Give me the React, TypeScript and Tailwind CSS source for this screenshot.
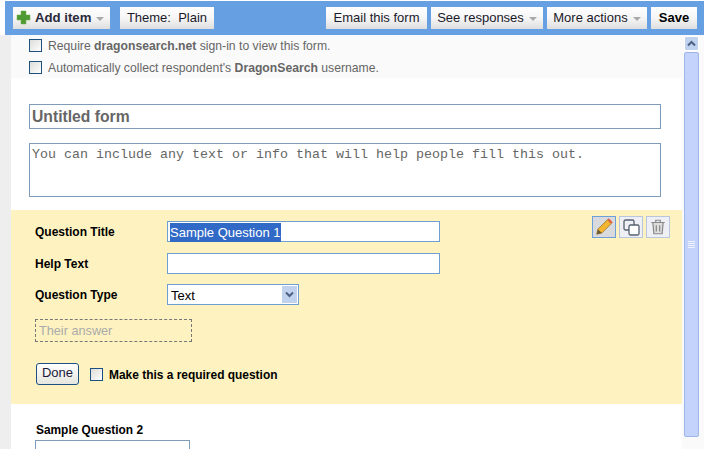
import React from "react";

const font = { fontFamily: '"Liberation Sans", Arial, sans-serif' };

function TopButton({ children, caret, bold, className = "" }: { children: React.ReactNode; caret?: boolean; bold?: boolean; className?: string }) {
  return (
    <div className={`flex h-[22px] items-center justify-center bg-gradient-to-b from-white via-[#f6f6f6] to-[#dedede] text-[13px] text-[#1a1a2a] ${bold ? "font-bold text-black" : ""} ${className}`}>
      <span className="whitespace-pre">{children}</span>
      {caret && <span className="ml-[5px] mt-[2px] h-0 w-0 border-x-[4px] border-t-[4px] border-x-transparent border-t-[#aaaaaa]" />}
    </div>
  );
}

function Check({ className = "" }: { className?: string }) {
  return <span className={`block h-[13px] w-[13px] shrink-0 border border-[#1c5180] bg-gradient-to-br from-[#dcdcd7] to-white ${className}`} />;
}

function ToolBtn({ children, active }: { children: React.ReactNode; active?: boolean }) {
  return (
    <div className={`flex h-[22px] w-[24px] items-center justify-center border ${active ? "border-[#6f9fd8] bg-[#d9dade]" : "border-[#b9c6dd] bg-[#eef0f5]"}`}>
      {children}
    </div>
  );
}

export default function App() {
  return (
    <div className="flex h-[449px] w-[704px] flex-col overflow-hidden bg-white" style={font}>
      <div className="ml-[5px] mt-px flex h-[34px] shrink-0 items-center bg-[#66a0e3] pb-px">
        <div className="ml-[8px] flex h-[22px] w-[97px] items-center bg-gradient-to-b from-white via-[#f6f6f6] to-[#dedede] pl-[3px] text-[13.2px] font-bold text-[#2a2a3a]">
          <svg width="15" height="15" viewBox="0 0 15 15" className="shrink-0">
            <path d="M5 1h5v4h4v5h-4v4H5v-4H1V5h4z" fill="#4f9a35" stroke="#6fae4a" strokeWidth="0.5" />
          </svg>
          <span className="ml-[4px]">Add item</span>
          <span className="ml-[5px] mt-[2px] h-0 w-0 border-x-[4px] border-t-[4px] border-x-transparent border-t-[#aaaaaa]" />
        </div>
        <TopButton className="ml-[10px] w-[94px]">Theme:  Plain</TopButton>
        <TopButton className="ml-[112px] w-[101px]">Email this form</TopButton>
        <TopButton caret className="ml-[4px] w-[112px]">See responses</TopButton>
        <TopButton caret className="ml-[4px] w-[100px]">More actions</TopButton>
        <TopButton bold className="ml-[4px] w-[46px]">Save</TopButton>
      </div>

      <div className="flex min-h-0 flex-1">
        <div className="w-[11px] shrink-0 bg-[#eeeeee]" />
        <div className="w-[671px] shrink-0">
          <div className="h-[43px] bg-[#fafafa] pl-[18px] pt-[4px] text-[12.2px] text-[#666666]">
            <div className="flex h-[13px] items-center">
              <Check />
              <span className="ml-[6px] pt-[2px]">Require <b>dragonsearch.net</b> sign-in to view this form.</span>
            </div>
            <div className="mt-[9px] flex h-[13px] items-center">
              <Check />
              <span className="ml-[6px] pt-[2px]">Automatically collect respondent's <b>DragonSearch</b> username.</span>
            </div>
          </div>

          <div className="h-[132px] pl-[18px] pt-[26px]">
            <div className="flex h-[25px] w-[632px] items-center border border-[#7f9db9] pl-[2px] text-[15.7px] font-bold text-[#666666]">
              Untitled form
            </div>
            <div
              className="mt-[14px] h-[54px] w-[632px] border border-[#7f9db9] pl-[2px] pt-[3px] text-[13.33px] leading-[15px] text-[#666666]"
              style={{ fontFamily: '"Liberation Mono", "Courier New", monospace' }}
            >
              You can include any text or info that will help people fill this out.
            </div>
          </div>

          <div className="relative h-[194px] bg-[#fef3c0] pl-[24px] pt-[11px]">
            <div className="absolute right-[12px] top-[6px] flex gap-[3px]">
              <ToolBtn active>
                <svg width="20" height="20" viewBox="0 0 18 18">
                  <path d="M2.5 15.5l1-4.5 8.5-8.5 3.5 3.5-8.5 8.5z" fill="#f2b632" stroke="#9a7420" strokeWidth="0.7" />
                  <path d="M12 2.5l1.3-1.3 3.5 3.5L15.5 6z" fill="#e0603c" />
                  <path d="M2.5 15.5l1-4.5 3.5 3.5z" fill="#6b5a3a" />
                </svg>
              </ToolBtn>
              <ToolBtn>
                <svg width="20" height="20" viewBox="0 0 20 20" fill="none" stroke="#55606f" strokeWidth="1.3">
                  <rect x="3" y="3" width="10" height="10" rx="1.5" fill="#eef0f5" />
                  <rect x="8" y="8" width="10" height="10" rx="1.5" fill="#ffffff" />
                </svg>
              </ToolBtn>
              <ToolBtn>
                <svg width="18" height="18" viewBox="0 0 16 16" fill="none" stroke="#8a8a8a" strokeWidth="1.1">
                  <path d="M2 4h12M6 4V2h4v2" />
                  <path d="M3.5 4.5l.8 9.5h7.4l.8-9.5" fill="#dddddd" />
                  <path d="M6.5 6.5v5.5M9.5 6.5v5.5" />
                </svg>
              </ToolBtn>
            </div>

            <div className="flex h-[21px] items-center">
              <span className="w-[132px] text-[12px] font-bold text-black">Question Title</span>
              <div className="flex h-[21px] w-[273px] items-center border border-[#6f9fd0] bg-white pl-[2px] pt-[2px] text-[13px]">
                <span className="bg-[#3169c6] text-white">Sample Question 1</span>
              </div>
            </div>
            <div className="mt-[11px] flex h-[21px] items-center">
              <span className="w-[132px] text-[12px] font-bold text-black">Help Text</span>
              <div className="h-[21px] w-[273px] border border-[#6f9fd0] bg-white" />
            </div>
            <div className="mt-[10px] flex h-[21px] items-center">
              <span className="w-[132px] text-[12px] font-bold text-black">Question Type</span>
              <div className="flex h-[21px] w-[132px] items-center justify-between border border-[#6f9fd0] bg-white pl-[3px] pr-px text-[13px] text-black">
                <span className="pt-[2px]">Text</span>
                <span className="flex h-[17px] w-[15px] items-center justify-center bg-[#c1d2ee]">
                  <svg width="9" height="7" viewBox="0 0 9 7" fill="none" stroke="#4d6185" strokeWidth="2">
                    <path d="M1 1.5l3.5 3.5L8 1.5" />
                  </svg>
                </span>
              </div>
            </div>
            <div className="mt-[14px] flex h-[23px] w-[157px] items-center border border-dashed border-[#777777] pl-[3px] pt-[3px] text-[12.7px] text-[#aaaaaa]">
              Their answer
            </div>
            <div className="mt-[21px] flex items-center">
              <div className="ml-[1px] flex h-[22px] w-[43px] items-center justify-center rounded-[3px] border border-[#1c5180] bg-gradient-to-b from-white to-[#e6e6df] pb-[2px] text-[13px] text-[#1a1a3a]">
                Done
              </div>
              <Check className="ml-[11px]" />
              <span className="ml-[6px] pt-[3px] text-[11.95px] font-bold text-black">Make this a required question</span>
            </div>
          </div>

          <div className="pl-[24px] pt-[19px]">
            <div className="ml-px text-[11.9px] font-bold leading-[14px] text-black">Sample Question 2</div>
            <div className="mt-[3px] h-[30px] w-[155px] border border-[#7f9db9]" />
          </div>
        </div>

        <div className="flex w-[22px] shrink-0 flex-col bg-[#fafafa] pl-[2px]">
          <div className="mt-[1px] flex h-[15px] w-[15px] items-center justify-center rounded-[2px] border border-white bg-[#c1d2ee]">
            <svg width="9" height="7" viewBox="0 0 9 7" fill="none" stroke="#4d6185" strokeWidth="2">
              <path d="M1 5.5L4.5 2 8 5.5" />
            </svg>
          </div>
          <div className="mt-[1px] flex h-[385px] w-[15px] shrink-0 items-center justify-center rounded-[2px] border border-[#9eb6e8] bg-[#c3d3fb]">
            <div className="flex flex-col gap-px">
              <span className="block h-px w-[7px] bg-[#eef3ff]" />
              <span className="block h-px w-[7px] bg-[#eef3ff]" />
              <span className="block h-px w-[7px] bg-[#eef3ff]" />
              <span className="block h-px w-[7px] bg-[#eef3ff]" />
            </div>
          </div>
        </div>
      </div>
    </div>
  );
}
